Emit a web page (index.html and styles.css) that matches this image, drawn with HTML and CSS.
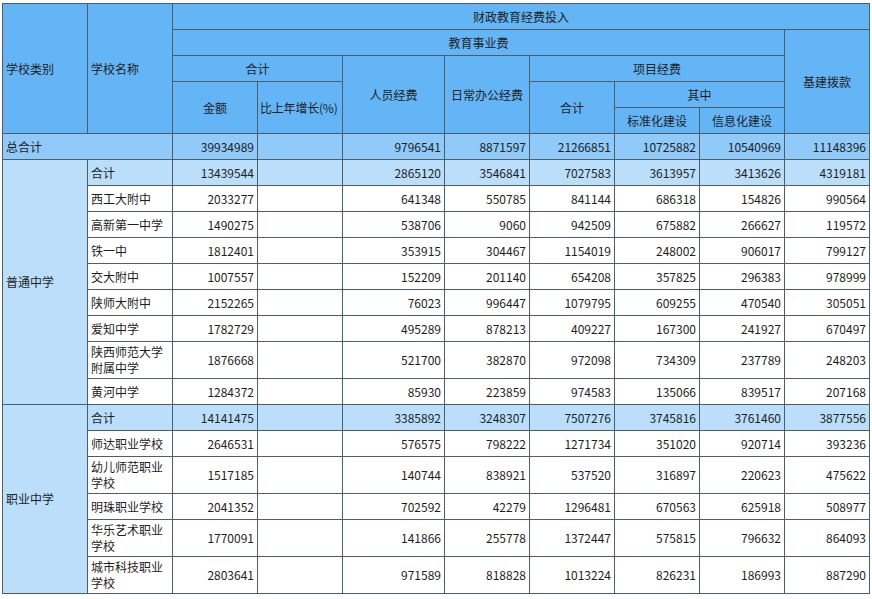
FILE: index.html
```html
<!DOCTYPE html>
<html lang="zh">
<head>
<meta charset="utf-8">
<title>财政教育经费投入</title>
<link rel="stylesheet" href="styles.css">
</head>
<body>
<table class="report">
  <colgroup>
    <col class="c85"><col class="c85"><col class="c85"><col class="c85"><col class="c102">
    <col class="c85"><col class="c85"><col class="c85"><col class="c85"><col class="c85">
  </colgroup>
  <thead>
    <tr>
      <th rowspan="5" class="left">学校类别</th>
      <th rowspan="5" class="left">学校名称</th>
      <th colspan="8">财政教育经费投入</th>
    </tr>
    <tr>
      <th colspan="7">教育事业费</th>
      <th rowspan="4">基建拨款</th>
    </tr>
    <tr>
      <th colspan="2">合计</th>
      <th rowspan="3">人员经费</th>
      <th rowspan="3">日常办公经费</th>
      <th colspan="3">项目经费</th>
    </tr>
    <tr>
      <th rowspan="2">金额</th>
      <th rowspan="2" class="tight">比上年增长(%)</th>
      <th rowspan="2">合计</th>
      <th colspan="2">其中</th>
    </tr>
    <tr>
      <th>标准化建设</th>
      <th>信息化建设</th>
    </tr>
  </thead>
  <tbody>
    <tr class="grand">
      <td colspan="2" class="name">总合计</td>
      <td>39934989</td><td></td><td>9796541</td><td>8871597</td><td>21266851</td><td>10725882</td><td>10540969</td><td>11148396</td>
    </tr>
    <tr class="sub">
      <td rowspan="9" class="cat">普通中学</td>
      <td class="name">合计</td>
      <td>13439544</td><td></td><td>2865120</td><td>3546841</td><td>7027583</td><td>3613957</td><td>3413626</td><td>4319181</td>
    </tr>
    <tr><td class="name">西工大附中</td><td>2033277</td><td></td><td>641348</td><td>550785</td><td>841144</td><td>686318</td><td>154826</td><td>990564</td></tr>
    <tr><td class="name">高新第一中学</td><td>1490275</td><td></td><td>538706</td><td>9060</td><td>942509</td><td>675882</td><td>266627</td><td>119572</td></tr>
    <tr><td class="name">铁一中</td><td>1812401</td><td></td><td>353915</td><td>304467</td><td>1154019</td><td>248002</td><td>906017</td><td>799127</td></tr>
    <tr><td class="name">交大附中</td><td>1007557</td><td></td><td>152209</td><td>201140</td><td>654208</td><td>357825</td><td>296383</td><td>978999</td></tr>
    <tr><td class="name">陕师大附中</td><td>2152265</td><td></td><td>76023</td><td>996447</td><td>1079795</td><td>609255</td><td>470540</td><td>305051</td></tr>
    <tr><td class="name">爱知中学</td><td>1782729</td><td></td><td>495289</td><td>878213</td><td>409227</td><td>167300</td><td>241927</td><td>670497</td></tr>
    <tr><td class="name">陕西师范大学附属中学</td><td>1876668</td><td></td><td>521700</td><td>382870</td><td>972098</td><td>734309</td><td>237789</td><td>248203</td></tr>
    <tr><td class="name">黄河中学</td><td>1284372</td><td></td><td>85930</td><td>223859</td><td>974583</td><td>135066</td><td>839517</td><td>207168</td></tr>
    <tr class="sub">
      <td rowspan="6" class="cat">职业中学</td>
      <td class="name">合计</td>
      <td>14141475</td><td></td><td>3385892</td><td>3248307</td><td>7507276</td><td>3745816</td><td>3761460</td><td>3877556</td>
    </tr>
    <tr><td class="name">师达职业学校</td><td>2646531</td><td></td><td>576575</td><td>798222</td><td>1271734</td><td>351020</td><td>920714</td><td>393236</td></tr>
    <tr><td class="name">幼儿师范职业学校</td><td>1517185</td><td></td><td>140744</td><td>838921</td><td>537520</td><td>316897</td><td>220623</td><td>475622</td></tr>
    <tr><td class="name">明珠职业学校</td><td>2041352</td><td></td><td>702592</td><td>42279</td><td>1296481</td><td>670563</td><td>625918</td><td>508977</td></tr>
    <tr><td class="name">华乐艺术职业学校</td><td>1770091</td><td></td><td>141866</td><td>255778</td><td>1372447</td><td>575815</td><td>796632</td><td>864093</td></tr>
    <tr><td class="name">城市科技职业学校</td><td>2803641</td><td></td><td>971589</td><td>818828</td><td>1013224</td><td>826231</td><td>186993</td><td>887290</td></tr>
  </tbody>
</table>
</body>
</html>
```
FILE: styles.css
```css
html, body {
  margin: 0;
  padding: 0;
  background: #ffffff;
}

body {
  padding: 3px 0 0 2px;
  font-family: "Noto Sans CJK SC", "Noto Sans", sans-serif;
  font-size: 12px;
  color: #1e1e1e;
}

.report {
  border-collapse: collapse;
  table-layout: fixed;
  width: 868px;
}

.c85 { width: 85px; }
.c102 { width: 102px; }

.report th,
.report td {
  border: 1px solid #4e5d6a;
  padding: 2px 3px;
  line-height: 16px;
  font-weight: normal;
  overflow: hidden;
}

.report th {
  background: #64b5f6;
  text-align: center;
  height: 21px;
}

.report th.left {
  text-align: left;
}

.report th.tight {
  padding: 2px 0 2px 2px;
  white-space: nowrap;
  text-align: left;
  letter-spacing: -0.2px;
}

.report td {
  height: 21px;
  text-align: right;
  background: #ffffff;
}

.report td.name,
.report td.cat {
  text-align: left;
}

.report td.cat {
  background: #bbdefb;
}

.report tr.grand td {
  background: #90caf9;
}

.report tr.sub td {
  background: #bbdefb;
}
```
